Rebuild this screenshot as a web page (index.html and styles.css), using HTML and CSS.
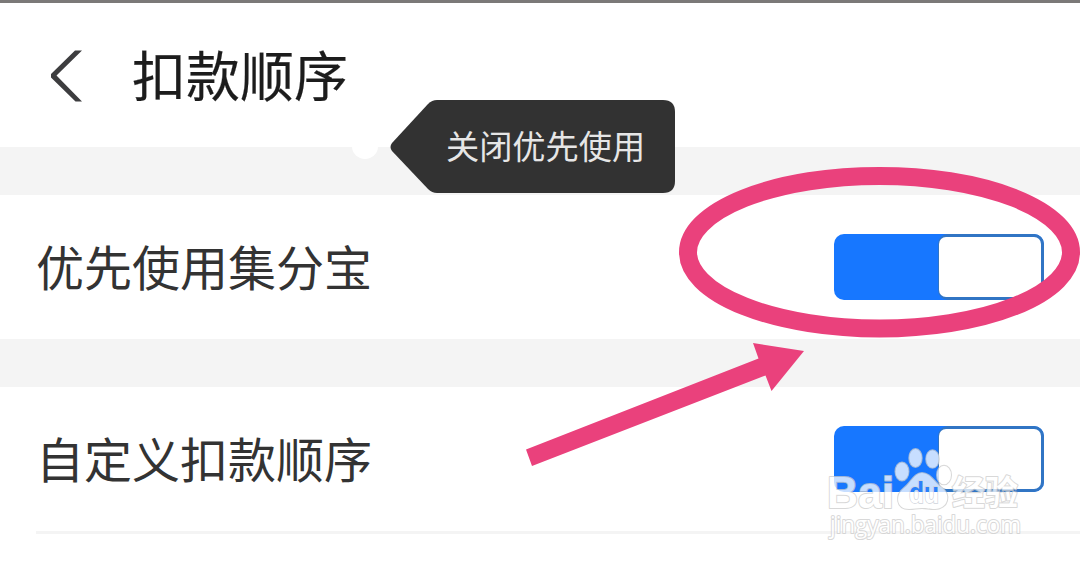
FILE: index.html
```html
<!DOCTYPE html>
<html lang="zh-CN">
<head>
<meta charset="utf-8">
<title>扣款顺序</title>
<link rel="stylesheet" href="styles.css">
</head>
<body>
<main class="screen">
  <header class="header">
    <svg class="back" width="34" height="52" viewBox="0 0 34 52"><path d="M25 0.500H32L6.500 25.500L32 51.500H25.500L1 27.500V24Z" fill="#3d3d3f"/></svg>
    <h1 class="title">扣款顺序</h1>
  </header>
  <div class="band"></div>
  <section class="row">
    <span class="label">优先使用集分宝</span>
    <span class="toggle"><span class="knob"></span></span>
  </section>
  <div class="band"></div>
  <section class="row">
    <span class="label">自定义扣款顺序</span>
    <span class="toggle"><span class="knob"></span></span>
  </section>
  <div class="divider"></div>

  <span class="dot"></span>
  <div class="tooltip">
    <svg class="tooltip-shape" width="285" height="93" viewBox="0 0 285 93"><path d="M47 0H273Q285 0 285 12V81Q285 93 273 93H47Q42 93 38 89L2 51Q-1 47 2 43L38 4Q42 0 47 0Z" fill="#323232"/></svg>
    <span class="tooltip-text">关闭优先使用</span>
  </div>

  <svg class="marks" width="1080" height="563" viewBox="0 0 1080 563">
    <ellipse cx="879.5" cy="252.2" rx="191.5" ry="76.3" fill="none" stroke="#ea417c" stroke-width="18"/>
    <path d="M526 449.5L758.5 358.500L753 343L804 351L771.5 391L765.5 375.5L532 466Z" fill="#ea417c"/>
  </svg>

  <svg class="watermark" width="220" height="110" viewBox="820 440 220 110">
    <defs>
      <linearGradient id="du-fill" gradientUnits="userSpaceOnUse" x1="0" y1="480" x2="0" y2="504">
        <stop offset="0.5" stop-color="#2a80fb"/>
        <stop offset="0.5" stop-color="#fff"/>
      </linearGradient>
    </defs>
    <g class="wm-shape">
      <ellipse cx="902" cy="471.5" rx="6.5" ry="9"/>
      <ellipse cx="915.5" cy="458" rx="6.200" ry="9"/>
      <ellipse cx="932.5" cy="459" rx="6.300" ry="8.700"/>
      <ellipse cx="944" cy="475" rx="7" ry="9.3"/>
      <path d="M922 473C930 473 934 482 941 487C952 494 948 509 935 509C929 509 927 508 922 508C917 508 914 509 909 509C896 509 895 495 904 488C911 483 914 473 922 473Z"/>
    </g>
    <text class="wm-latin" x="827" y="507.500" textLength="67" lengthAdjust="spacingAndGlyphs">Bai</text>
    <text class="wm-du" x="909" y="502.500" textLength="30" lengthAdjust="spacingAndGlyphs">du</text>
    <text class="wm-cjk" x="952" y="504.500" textLength="66" lengthAdjust="spacingAndGlyphs">经验</text>
    <text class="wm-url" x="830" y="533" textLength="191" lengthAdjust="spacingAndGlyphs">jingyan.baidu.com</text>
  </svg>
</main>
</body>
</html>
```
FILE: styles.css
```css
body {
  margin: 0;
  background: #fff;
  font-family: "Noto Sans CJK SC", sans-serif;
}

.screen {
  position: relative;
  box-sizing: border-box;
  width: 1080px;
  height: 563px;
  overflow: hidden;
  border-top: 3px solid #7b7978;
  background: #fff;
}

.header {
  box-sizing: border-box;
  display: flex;
  align-items: center;
  height: 144px;
  padding: 0 0 0 50px;
}

.back {
  flex: none;
  margin: 2px 48px 0 0;
}

.title {
  margin: 0 0 2px;
  font-size: 54px;
  font-weight: 400;
  line-height: 80px;
  color: #1c1c1c;
  -webkit-text-stroke: 0.2px #1c1c1c;
}

.band {
  height: 48px;
  background: #f4f4f4;
}

.row {
  box-sizing: border-box;
  display: flex;
  align-items: center;
  justify-content: space-between;
  height: 144px;
  padding: 0 36px;
}

.label {
  margin-bottom: 4px;
  font-size: 48px;
  line-height: 72px;
  color: #333;
}

.toggle {
  box-sizing: border-box;
  display: flex;
  justify-content: flex-end;
  width: 210px;
  height: 66px;
  padding: 3px;
  overflow: hidden;
  border-radius: 10px;
  background: #1777ff;
}

.knob {
  width: 102px;
  height: 60px;
  border-radius: 7px;
  background: #fff;
  box-shadow: 2px 0 0 3px #3175c4;
}

.divider {
  height: 3px;
  margin-left: 36px;
  background: #f4f4f4;
}

.dot {
  position: absolute;
  top: 131px;
  left: 352px;
  width: 26px;
  height: 25px;
  border-radius: 50%;
  background: #fff;
}

.tooltip {
  position: absolute;
  top: 97px;
  left: 390px;
  width: 285px;
  height: 93px;
}

.tooltip-shape {
  display: block;
}

.tooltip-text {
  position: absolute;
  top: 21px;
  left: 56px;
  font-size: 33.2px;
  line-height: 48px;
  white-space: nowrap;
  color: #e6e6e6;
}

.marks {
  position: absolute;
  top: -3px;
  left: 0;
}

.watermark {
  position: absolute;
  top: 437px;
  left: 820px;
}

.wm-shape,
.wm-latin,
.wm-cjk,
.wm-url {
  fill: #fff;
  stroke: #ccc;
  stroke-width: 2px;
  stroke-linejoin: round;
  paint-order: stroke;
  opacity: 0.76;
}

.wm-latin {
  font: 700 45px "Liberation Sans", sans-serif;
}

.wm-du {
  font: 700 29px "Liberation Sans", sans-serif;
  fill: url(#du-fill);
  stroke: #d0d4dc;
  stroke-width: 1.5px;
  paint-order: stroke;
}

.wm-cjk {
  font: 700 34px "Noto Sans CJK SC", sans-serif;
}

.wm-url {
  font: 400 24px "Open Sans", sans-serif;
}
```
